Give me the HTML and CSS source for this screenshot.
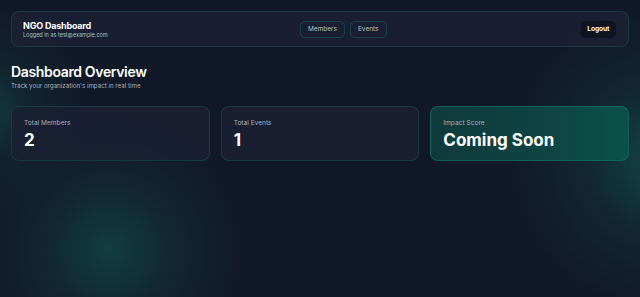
FILE: index.html
```html
<!DOCTYPE html>
<html lang="en">
<head>
<meta charset="utf-8">
<title>NGO Dashboard</title>
<link rel="stylesheet" href="styles.css">
</head>
<body>
<main class="page">
  <header class="topbar">
    <div class="brand">
      <div class="brand-title">NGO Dashboard</div>
      <div class="brand-sub">Logged in as test@example.com</div>
    </div>
    <nav class="nav">
      <a class="nav-link">Members</a>
      <a class="nav-link">Events</a>
    </nav>
    <button class="logout">Logout</button>
  </header>
  <section class="intro">
    <h1 class="intro-title">Dashboard Overview</h1>
    <p class="intro-sub">Track your organization's impact in real time</p>
  </section>
  <section class="stats">
    <div class="card">
      <div class="card-label">Total Members</div>
      <div class="card-value">2</div>
    </div>
    <div class="card">
      <div class="card-label">Total Events</div>
      <div class="card-value">1</div>
    </div>
    <div class="card card-accent">
      <div class="card-label">Impact Score</div>
      <div class="card-value">Coming Soon</div>
    </div>
  </section>
</main>
</body>
</html>
```
FILE: styles.css
```css
* { box-sizing: border-box; }
html, body {
  margin: 0;
  height: 100%;
}
body {
  font-family: Inter, "Liberation Sans", sans-serif;
  color: #f1f5f9;
  overflow: hidden;
  background-color: #111827;
  background-image:
    radial-gradient(circle at 110px 250px, rgba(19,85,80,0.6) 0px, rgba(19,75,72,0.28) 65px, rgba(17,24,39,0) 135px),
    radial-gradient(circle at 660px 160px, rgba(19,100,92,0.6) 0px, rgba(19,80,78,0.25) 75px, rgba(17,24,39,0) 155px),
    radial-gradient(circle at -20px 110px, rgba(19,100,92,0.5) 0px, rgba(19,80,78,0.2) 50px, rgba(17,24,39,0) 110px);
}
.page {
  padding: 11px 11px;
}
.topbar {
  display: flex;
  align-items: center;
  justify-content: space-between;
  height: 36px;
  padding: 0 12px 0 11px;
  background: rgba(27,32,51,0.92);
  border: 1px solid rgba(20,110,100,0.35);
  border-radius: 8px;
}
.brand-title {
  font-size: 9px;
  font-weight: 700;
  letter-spacing: -0.2px;
  color: #ffffff;
  line-height: 11px;
}
.brand-sub {
  font-size: 5.5px;
  color: #9fc3bd;
  line-height: 8px;
}
.nav {
  display: flex;
  gap: 5px;
  margin-right: 2px;
}
.nav-link {
  display: flex;
  align-items: center;
  height: 17px;
  padding: 0 7px;
  font-size: 6.5px;
  color: #a8c7c2;
  border: 1px solid rgba(20,110,100,0.45);
  border-radius: 5px;
}
.logout {
  height: 17px;
  padding: 0 6.5px;
  border: none;
  border-radius: 5px;
  background: #10141f;
  color: #ffffff;
  font-family: inherit;
  font-size: 6.5px;
  font-weight: 700;
}
.intro { margin-top: 15px; }
.intro-title {
  margin: 0;
  font-size: 14px;
  font-weight: 600;
  letter-spacing: -0.35px;
  line-height: 20px;
  color: #ffffff;
}
.intro-sub {
  margin: 0;
  font-size: 6.2px;
  line-height: 8px;
  color: #a3b0bf;
}
.stats {
  margin-top: 16px;
  display: grid;
  grid-template-columns: repeat(3, 1fr);
  gap: 11px;
}
.card {
  height: 55px;
  padding: 12px 12px;
  background: rgba(27,32,51,0.9);
  border: 1px solid rgba(20,110,100,0.35);
  border-radius: 8px;
}
.card-accent {
  background: linear-gradient(90deg, #0f3a3c 0%, #0e4443 60%, #0b5149 100%);
  border-color: rgba(20,130,115,0.5);
}
.card-label {
  font-size: 6.6px;
  color: #a3adbd;
  line-height: 8px;
}
.card-value {
  margin-top: 3px;
  font-size: 17px;
  font-weight: 700;
  line-height: 20px;
  color: #ffffff;
}
```
